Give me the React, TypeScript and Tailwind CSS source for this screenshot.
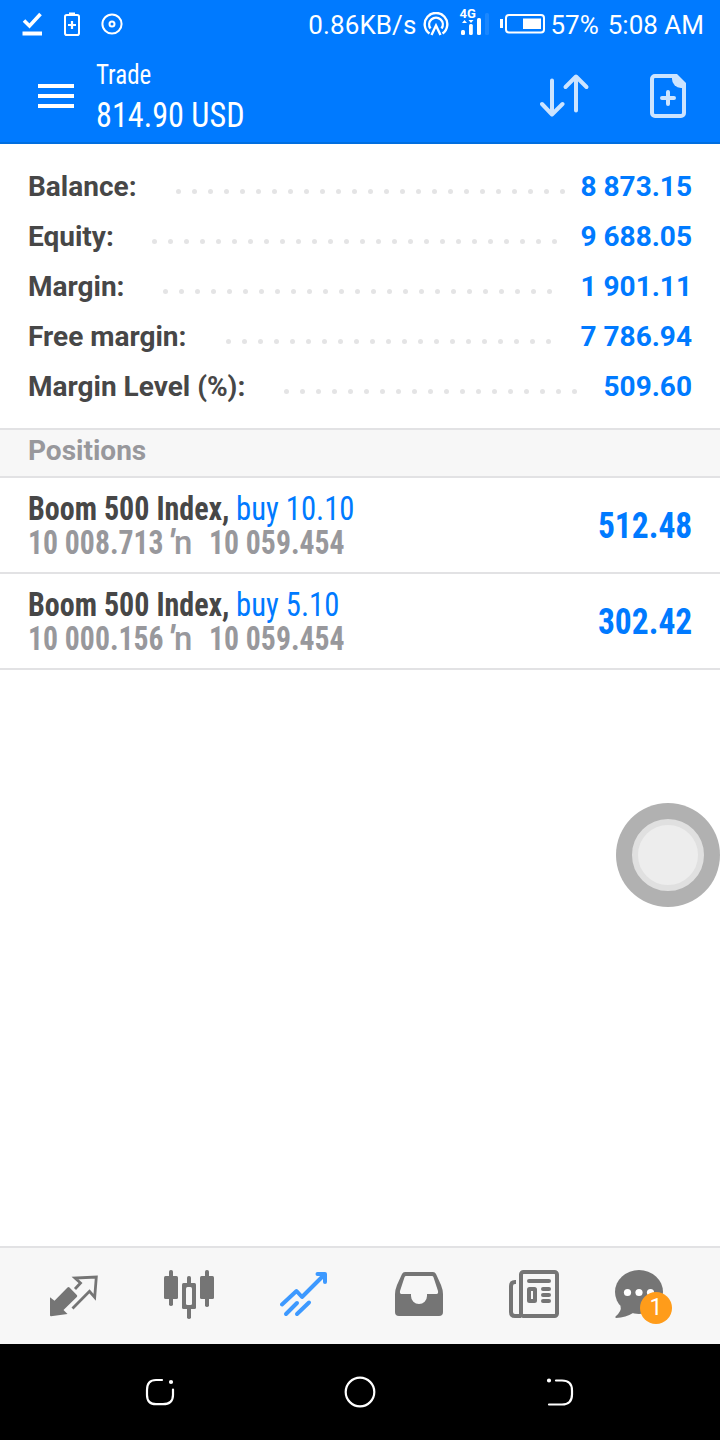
import type { ReactNode } from 'react';

interface SummaryRow {
  label: string;
  value: string;
  dots: number;
  labelWidth: string;
}

interface Position {
  symbol: string;
  side: string;
  open: string;
  current: string;
  profit: string;
}

const SUMMARY: SummaryRow[] = [
  { label: 'Balance:', value: '8 873.15', dots: 25, labelWidth: 'w-[148px]' },
  { label: 'Equity:', value: '9 688.05', dots: 26, labelWidth: 'w-[124px]' },
  { label: 'Margin:', value: '1 901.11', dots: 25, labelWidth: 'w-[135px]' },
  { label: 'Free margin:', value: '7 786.94', dots: 21, labelWidth: 'w-[198px]' },
  { label: 'Margin Level (%):', value: '509.60', dots: 19, labelWidth: 'w-[256px]' }
];

const POSITIONS: Position[] = [
  { symbol: 'Boom 500 Index,', side: 'buy 10.10', open: '10 008.713', current: '10 059.454', profit: '512.48' },
  { symbol: 'Boom 500 Index,', side: 'buy 5.10', open: '10 000.156', current: '10 059.454', profit: '302.42' }
];

const CONDENSED = "font-['Roboto_Condensed','Roboto',sans-serif] [font-stretch:75%]";

function StatusBar() {
  return (
    <div className="flex h-12 items-center pl-[22px] pr-4 text-[26px] leading-[30px]">
      <svg className="mr-5 h-6 w-5" viewBox="0 0 20 24" fill="none" stroke="#fff">
        <path d="M2 8.5l5.5 5.5L18.5 2" strokeWidth="3.6" />
        <path d="M.5 21.5h19.500" strokeWidth="4" />
      </svg>
      <svg className="mr-[19px] h-6 w-5" viewBox="0 0 20 24" fill="none" stroke="#fff">
        <rect x="3" y="3" width="14" height="20" rx="1.800" strokeWidth="2" />
        <path d="M7 1.500h6M10 9v8M6 13h8" strokeWidth="2.200" />
      </svg>
      <svg className="size-6" viewBox="0 0 24 24" fill="none" stroke="#fff">
        <circle cx="11" cy="12" r="9.600" strokeWidth="2" />
        <circle cx="11" cy="12" r="2.500" strokeWidth="2" />
      </svg>
      <div className="ml-auto flex items-center">
        <span className="mr-[7px] pt-[2px] tracking-[0.1px]">0.86KB/s</span>
        <svg className="mr-[10px] h-6 w-[26px]" viewBox="0 0 26 24" fill="none" stroke="#fff" strokeWidth="2.400">
          <path d="M6.500 21.500A11.300 11.300 0 1 1 19.500 21.500" />
          <path d="M7.500 16.500A6.800 6.800 0 1 1 18.500 16.500" />
          <path d="M8.500 23L13 13.500 17.500 23" />
        </svg>
        <div className="mr-[10px] flex h-[30px] w-[31px] flex-col">
          <span className="text-[13px] font-bold leading-[10px]">4G</span>
          <svg className="h-[18px] w-[31px] overflow-visible" viewBox="0 0 31 18" fill="#fff">
            <rect x="2" y="11" width="4" height="5" rx="1.500" />
            <rect x="10" y="5" width="3.800" height="11" rx="1.500" />
            <rect x="18" y="-1" width="4" height="17" rx="1.500" />
            <rect x="26" y="-6" width="4" height="22" rx="1.500" opacity=".1" />
            <path d="M3 4l2.500-3L8 4zM9.500 1h5L12 4z" />
          </svg>
        </div>
        <svg className="mr-[5px] h-5 w-[45px]" viewBox="0 0 45 20" fill="none">
          <rect x="0" y="5" width="3" height="9" fill="#fff" />
          <rect x="6" y="1" width="38" height="17.500" rx="3" stroke="#fff" strokeWidth="2" />
          <rect x="23" y="4.500" width="18" height="10.500" fill="#fff" />
        </svg>
        <span className="mr-[9px] pt-[2px]">57%</span>
        <span className="pt-[2px]">5:08 AM</span>
      </div>
    </div>
  );
}

function AppBar() {
  return (
    <div className="flex h-24 items-start border-b-2 border-[#006ee0] pl-[38px] pr-[34px]">
      <div className="mr-[22px] mt-9 flex w-9 flex-col gap-[6px]">
        <span className="h-1 bg-white" />
        <span className="h-1 bg-white" />
        <span className="h-1 bg-white" />
      </div>
      <div className={`${CONDENSED} flex flex-col pt-[11px]`}>
        <span className="origin-left scale-x-[0.925] text-[27px] leading-8">Trade</span>
        <span className="mt-1 origin-left scale-x-[0.92] text-[35px] leading-[42px]">814.90 USD</span>
      </div>
      <svg className="ml-auto mt-6 h-12 w-[50px]" viewBox="0 0 50 48" fill="none" stroke="#cce4ff" strokeWidth="4" strokeLinecap="round" strokeLinejoin="round">
        <path d="M12 8.500V42M2 32L12 42.500 22.500 32" />
        <path d="M36 38.500V5M25.500 15L36 4.500 46.500 15" />
      </svg>
      <svg className="ml-[60px] mt-[26px] h-11 w-9" viewBox="0 0 36 44" fill="none">
        <path d="M24 2H5a3 3 0 0 0-3 3v34a3 3 0 0 0 3 3h26a3 3 0 0 0 3-3V12" stroke="#cce4ff" strokeWidth="4" />
        <path d="M22 0h5l9 9v5h-5a9 9 0 0 1-9-9z" fill="#cce4ff" />
        <path d="M18 18v12M12 24h12" stroke="#cce4ff" strokeWidth="4" strokeLinecap="round" />
      </svg>
    </div>
  );
}

function Summary() {
  return (
    <div className="flex h-[284px] flex-col px-7 pt-[18px] text-[28px] font-bold">
      {SUMMARY.map((row) => (
        <div key={row.label} className="flex h-[50px] items-center">
          <span className={`${row.labelWidth} shrink-0 whitespace-nowrap text-[#474747]`}>{row.label}</span>
          <div className="mt-[9px] flex gap-[11px]">
            {Array.from({ length: row.dots }, (_, i) => (
              <span key={i} className="size-[5px] rounded-full bg-[#e4e4e5]" />
            ))}
          </div>
          <span className="ml-auto whitespace-nowrap text-[#007aff]">{row.value}</span>
        </div>
      ))}
    </div>
  );
}

function PositionRow({ position }: { position: Position }) {
  return (
    <div className={`${CONDENSED} flex h-24 items-center justify-between border-b-2 border-[#e2e2e4] px-7 pt-[2px] font-bold`}>
      <div className="flex h-[68px] flex-col whitespace-nowrap text-[33px] leading-[34px]">
        <div className="flex">
          <span className="w-[208px]">
            <span className="inline-block origin-left scale-x-[0.91] text-[#474747]">{position.symbol}</span>
          </span>
          <span className="origin-left scale-x-[0.93] font-normal text-[#007aff]">{position.side}</span>
        </div>
        <div className="flex h-[34px] text-[#98989c]">
          <span className="w-[141px]">
            <span className="inline-block origin-left scale-x-[0.9]">{position.open}</span>
          </span>
          <span className="-mt-px w-[5px] font-black italic">′</span>
          <span className="w-[35px] font-['Roboto',sans-serif] font-medium [font-stretch:100%]">n</span>
          <span className="origin-left scale-x-[0.9]">{position.current}</span>
        </div>
      </div>
      <span className="origin-right scale-x-[0.905] text-[37px] text-[#007aff]">{position.profit}</span>
    </div>
  );
}

function Tab({ children }: { children: ReactNode }) {
  return <div className="relative flex h-24 w-[115px] items-center justify-center pb-1">{children}</div>;
}

function TabBar() {
  return (
    <div className="flex h-[98px] border-t-2 border-[#e2e2e4] bg-[#f7f7f7] pl-[16px]">
      <Tab>
        <svg className="mt-1 h-[44px] w-[49px]" viewBox="0 0 49 44" fill="none">
          <path d="M1 23.300l4.500 3.500L18.500 13.600q1-1 2 0l7.300 7.300q1 1 0 2L14.500 36l4 4-16.500 2.300q-1 0-1-1z" fill="#757575" />
          <path d="M26 15l5.500-6-5.500-5 21.300-1-1.600 20.300-5.200-6L23.500 34.500" stroke="#757575" strokeWidth="2.800" />
        </svg>
      </Tab>
      <Tab>
        <svg className="mt-[2px] h-[50px] w-[50px]" viewBox="0 0 50 50" fill="#757575">
          <rect x="5" y="0" width="4" height="36" rx="1.800" />
          <rect x="0" y="6" width="14" height="23" rx="1.500" />
          <rect x="41" y="0" width="4" height="37" rx="1.800" />
          <rect x="36" y="6" width="14" height="23" rx="1.500" />
          <rect x="23" y="6" width="4" height="43" rx="1.800" />
          <rect x="18" y="13" width="14" height="26" rx="1.500" />
          <rect x="22" y="17" width="6" height="18" rx="1.500" fill="#f7f7f7" />
        </svg>
      </Tab>
      <Tab>
        <svg className="h-[46px] w-[48px]" viewBox="0 0 48 46" fill="none" stroke="#3d99ff" strokeWidth="4" strokeLinecap="round" strokeLinejoin="round">
          <path d="M2 33.500L16.500 20l5.500 6L44 4" />
          <path d="M37.500 3H45V11" />
          <path d="M6 43L17 32M17 43L29 31.500" />
        </svg>
      </Tab>
      <Tab>
        <svg className="h-[44px] w-[48px]" viewBox="0 0 48 44">
          <path d="M10 0H38q2 0 3 2l5 11q2 5 2 9V40q0 4-4 4H4q-4 0-4-4V22q0-4 2-9L7 2q1-2 3-2z" fill="#757575" />
          <path d="M11 4H37q1 0 1.500 1.200L43 19q.5 3-1.500 3H32v2a8 8 0 0 1-16 0V22H6.500Q4.500 22 5 19L9.500 5.200Q10 4 11 4z" fill="#f7f7f7" />
        </svg>
      </Tab>
      <Tab>
        <svg className="h-[48px] w-[50px]" viewBox="0 0 50 48" fill="none" stroke="#757575" strokeWidth="4">
          <path d="M7 12H6q-4 0-4 4V42q0 4 4 4h6" />
          <rect x="12" y="2" width="36" height="44" rx="2.500" />
          <path d="M20 11H40M34 19h6M34 25h6M34 31h6" strokeLinecap="round" />
          <rect x="20" y="19" width="6" height="12" rx=".5" />
        </svg>
      </Tab>
      <Tab>
        <svg className="mr-5 h-[48px] w-[48px]" viewBox="0 0 48 48">
          <path d="M5.500 36Q7 41 .5 46.500 0 47.500 1 48 11 47.500 18 43L24 40z" fill="#757575" />
          <ellipse cx="24" cy="22" rx="24" ry="22" fill="#757575" />
          <g fill="#fff">
            <circle cx="12.500" cy="22.500" r="3.600" />
            <circle cx="24" cy="22.500" r="3.600" />
            <circle cx="35.500" cy="22.500" r="3.600" />
          </g>
        </svg>
        <span className="absolute left-[49px] top-[44px] flex size-8 items-center justify-center rounded-full bg-[#ff9c1a] pt-px text-[23px] text-white">
          1
        </span>
      </Tab>
    </div>
  );
}

function NavigationBar() {
  return (
    <div className="flex h-24 items-center justify-between bg-black px-[144px]">
      <svg className="size-8" viewBox="0 0 32 32" fill="none" stroke="#fff" strokeWidth="2.200" strokeLinecap="round">
        <path d="M18 4H12Q3 4 3 14v5q0 9.200 9 9.200h7q10 0 10-9.200V13.500" />
        <circle cx="27" cy="6" r="1" fill="#fff" />
      </svg>
      <svg className="size-8" viewBox="0 0 32 32" fill="none" stroke="#fff" strokeWidth="2.200">
        <circle cx="16" cy="16" r="14.300" />
      </svg>
      <svg className="size-8" viewBox="0 0 32 32" fill="none" stroke="#fff" strokeWidth="2.200" strokeLinecap="round">
        <path d="M12 4.500h6q10 0 10 10v4q0 10-10 10H5" />
        <circle cx="5" cy="4.500" r="1" fill="#fff" />
      </svg>
    </div>
  );
}

export default function App() {
  return (
    <div className="relative flex h-[1440px] w-[720px] flex-col overflow-hidden bg-white font-['Roboto',sans-serif]">
      {/* Header */}
      <div className="bg-[#007aff] text-white">
        <StatusBar />
        <AppBar />
      </div>

      <Summary />

      <div className="h-[50px] border-y-2 border-[#e2e2e4] bg-[#f7f7f7] px-7 text-[28px] font-bold leading-[42px] text-[#98989c]">
        Positions
      </div>
      {POSITIONS.map((position) => (
        <PositionRow key={position.open} position={position} />
      ))}

      <div className="mt-auto">
        <TabBar />
        <NavigationBar />
      </div>

      {/* Floating assistive button */}
      <div className="absolute left-[616px] top-[803px] flex size-[104px] items-center justify-center rounded-full bg-[#b1b1b1]">
        <div className="size-[72px] rounded-full border-[6px] border-[#e0e0e0] bg-[#ededed]" />
      </div>
    </div>
  );
}
